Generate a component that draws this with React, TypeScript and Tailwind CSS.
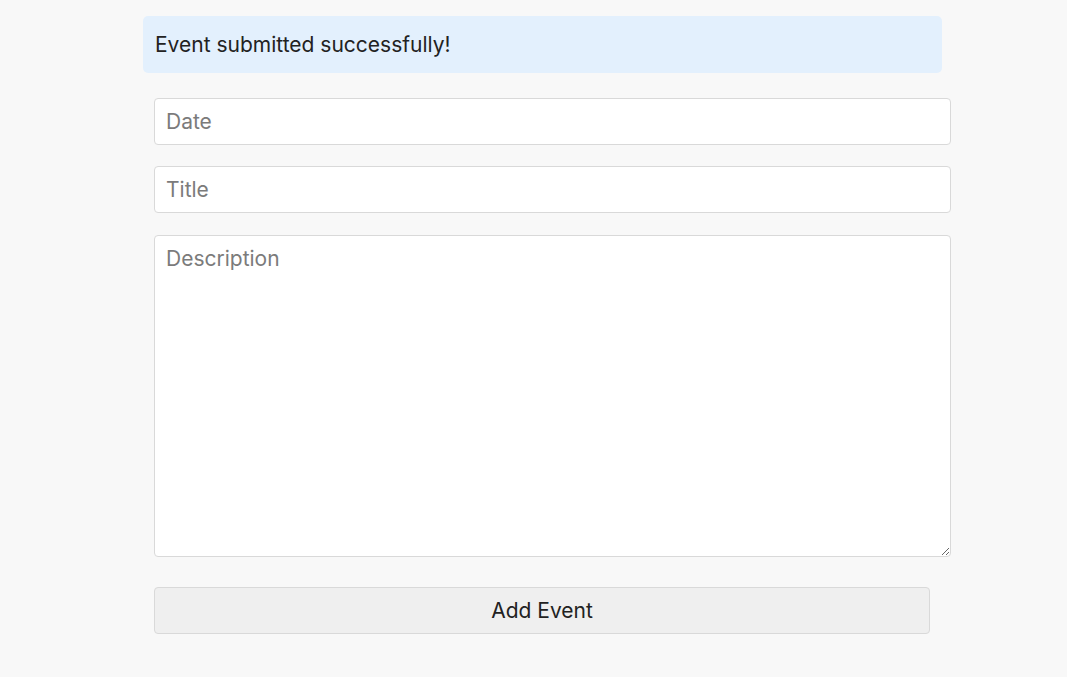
import React, { useState } from 'react';

export default function App() {
  const [date, setDate] = useState('');
  const [title, setTitle] = useState('');
  const [description, setDescription] = useState('');

  const fieldClass =
    'block w-[797px] h-[47px] px-[11px] bg-white border border-[#d9d9d9] rounded-[4px] text-[21px] text-[#222] placeholder:text-[#7b7b7b] outline-none';

  return (
    <div
      className="min-h-[677px] bg-[#f8f8f8] pt-4"
      style={{ fontFamily: 'Inter, "Noto Sans", sans-serif' }}
    >
      <div className="ml-[143px] w-[799px]">
        <div className="h-[57px] flex items-center px-3 bg-[#e3f0fd] rounded-[5px] text-[21px] text-[#222]">
          Event submitted successfully!
        </div>

        <form
          className="mt-[25px] pl-[11px] flex flex-col"
          onSubmit={(e) => e.preventDefault()}
        >
          <input
            type="text"
            placeholder="Date"
            value={date}
            onChange={(e) => setDate(e.target.value)}
            className={fieldClass}
          />
          <input
            type="text"
            placeholder="Title"
            value={title}
            onChange={(e) => setTitle(e.target.value)}
            className={`${fieldClass} mt-[21px]`}
          />
          <textarea
            placeholder="Description"
            value={description}
            onChange={(e) => setDescription(e.target.value)}
            className="block mt-[22px] w-[797px] h-[322px] px-[11px] py-[10px] bg-white border border-[#d9d9d9] rounded-[4px] text-[21px] leading-[26px] text-[#222] placeholder:text-[#7b7b7b] outline-none"
          />
          <button
            type="submit"
            className="mt-[30px] w-[776px] h-[47px] bg-[#efefef] border border-[#d9d9d9] rounded-[4px] text-[21px] text-[#222]"
          >
            Add Event
          </button>
        </form>
      </div>
    </div>
  );
}
